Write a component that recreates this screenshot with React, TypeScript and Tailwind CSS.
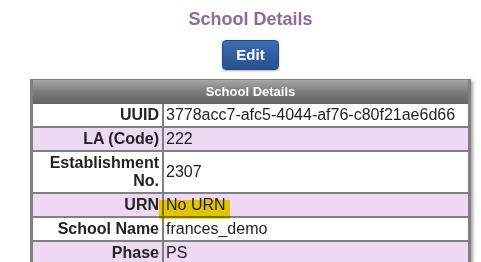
import React from "react";

const rows: { label: React.ReactNode; value: React.ReactNode; pink: boolean; hl?: boolean }[] = [
  { label: "UUID", value: "3778acc7-afc5-4044-af76-c80f21ae6d66", pink: false },
  { label: "LA (Code)", value: "222", pink: true },
  { label: <>Establishment<br />No.</>, value: "2307", pink: false },
  { label: "URN", value: "No URN", pink: true, hl: true },
  { label: "School Name", value: "frances_demo", pink: false },
  { label: "Phase", value: "PS", pink: true },
];

export default function App() {
  return (
    <div
      className="w-[481px] h-[262px] overflow-hidden bg-white pl-[20px] flex flex-col items-center"
      style={{ fontFamily: '"Liberation Sans", Arial, sans-serif' }}
    >
      <div className="shrink-0 mt-[9px] text-[18px] leading-[21px] font-bold text-[#8e6b9b]">School Details</div>
      <div className="shrink-0 mt-[10px] w-[57px] h-[30px] rounded-[4px] border border-[#24487f] bg-gradient-to-b from-[#3d6db3] to-[#28518f] text-white font-bold text-[15px] flex items-center justify-center shadow-[0_1px_2px_rgba(0,0,0,0.3)]">
        Edit
      </div>
      <div className="shrink-0 mt-[9px] w-[441px] border-x-[3px] border-t-[1px] border-[#808080] shadow-[2px_2px_3px_rgba(0,0,0,0.35)]">
        <div className="h-[24px] bg-gradient-to-b from-[#a8a8a8] via-[#7c7c7c] to-[#646464] text-white font-bold text-[13px] flex items-center justify-center">
          School Details
        </div>
        {rows.map((r, i) => (
          <div
            key={i}
            className={`grid grid-cols-[129px_2px_1fr] border-b-2 border-[#808080] ${r.pink ? "bg-[#efd8f4]" : "bg-white"}`}
          >
            <div className="text-right font-bold text-[16px] leading-[18px] text-[#222] py-[2px] pr-[3px]">{r.label}</div>
            <div className="bg-[#808080]" />
            <div className="relative text-[16px] leading-[18px] text-[#222] py-[2px] pl-[2px] flex items-center">
              {r.hl && (
                <div className="absolute left-[-5px] top-[6px] w-[71px] h-[19px] bg-[#f2e600] mix-blend-multiply" />
              )}
              <span className="relative">{r.value}</span>
            </div>
          </div>
        ))}
      </div>
    </div>
  );
}
